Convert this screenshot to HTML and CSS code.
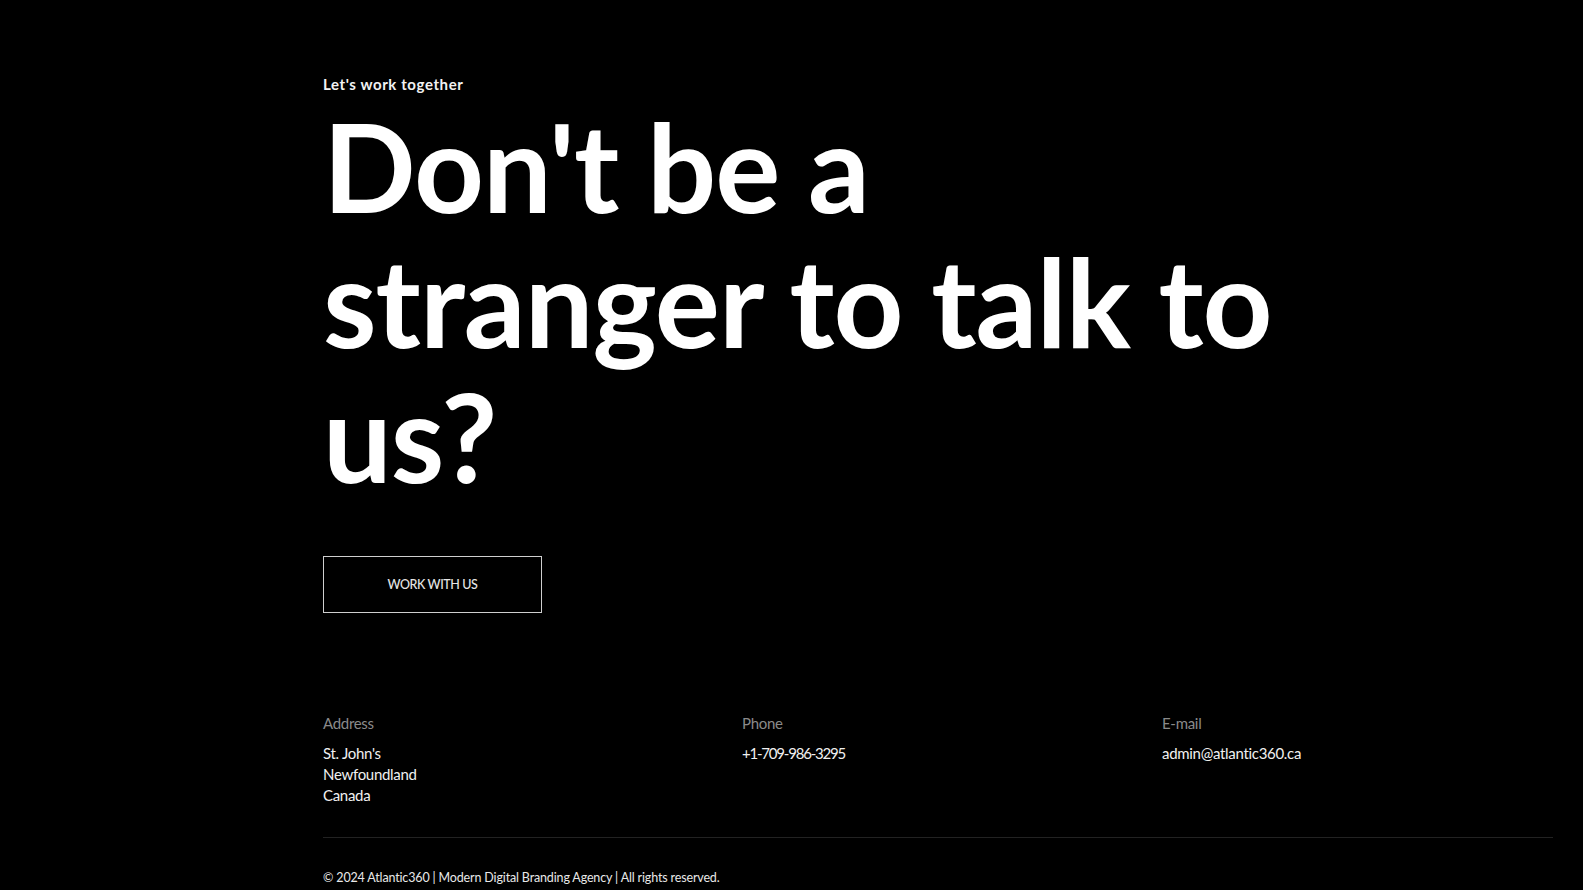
FILE: index.html
```html
<!DOCTYPE html>
<html lang="en">
<head>
<meta charset="utf-8">
<title>Let's work together</title>
<link rel="stylesheet" href="styles.css">
</head>
<body>
<section class="contact">
  <p class="eyebrow">Let's work together</p>
  <h1 class="headline">Don't be a<br>stranger to talk to<br>us?</h1>
  <a class="cta" href="#">WORK WITH US</a>
  <div class="details">
    <div class="detail">
      <div class="label">Address</div>
      <div class="value">St. John's<br>Newfoundland<br>Canada</div>
    </div>
    <div class="detail">
      <div class="label">Phone</div>
      <div class="value value-tight">+1-709-986-3295</div>
    </div>
    <div class="detail">
      <div class="label">E-mail</div>
      <div class="value">admin@atlantic360.ca</div>
    </div>
  </div>
  <footer class="footer">
    <p class="copyright">© 2024 Atlantic360 | Modern Digital Branding Agency | All rights reserved.</p>
  </footer>
</section>
</body>
</html>
```

FILE: styles.css
```css
html, body {
  margin: 0;
  padding: 0;
  background: #000;
  color: #fff;
  height: 100%;
  overflow: hidden;
}

.contact {
  padding: 0 30px 0 323px;
  font-family: "Lato", "Liberation Sans", sans-serif;
}

.eyebrow {
  margin: 0;
  padding-top: 74px;
  font-size: 15px;
  line-height: 20px;
  font-weight: 700;
  letter-spacing: 0.6px;
  color: #f2f2f2;
}

.headline {
  margin: 5px 0 0 0;
  font-size: 122px;
  line-height: 135px;
  font-weight: 700;
  letter-spacing: -1px;
  color: #fff;
}

.cta {
  display: flex;
  align-items: center;
  justify-content: center;
  width: 217px;
  height: 55px;
  margin-top: 52px;
  border: 1px solid #cfcfcf;
  color: #e6e6e6;
  text-decoration: none;
  font-size: 12.5px;
  font-weight: 500;
  letter-spacing: -0.4px;
}

.details {
  display: grid;
  grid-template-columns: 419px 420px 1fr;
  margin-top: 100px;
}

.label {
  font-size: 15px;
  line-height: 20px;
  color: #8a8a8a;
  letter-spacing: -0.3px;
}

.value {
  margin-top: 10px;
  font-size: 15px;
  line-height: 21px;
  color: #f0f0f0;
  letter-spacing: -0.3px;
}

.value-tight {
  letter-spacing: -1.2px;
}

.footer {
  margin-top: 31px;
  border-top: 1px solid #222;
}

.copyright {
  margin: 0;
  padding-top: 32px;
  font-size: 12.5px;
  line-height: 16px;
  color: #e8e8e8;
  letter-spacing: -0.15px;
}
```
